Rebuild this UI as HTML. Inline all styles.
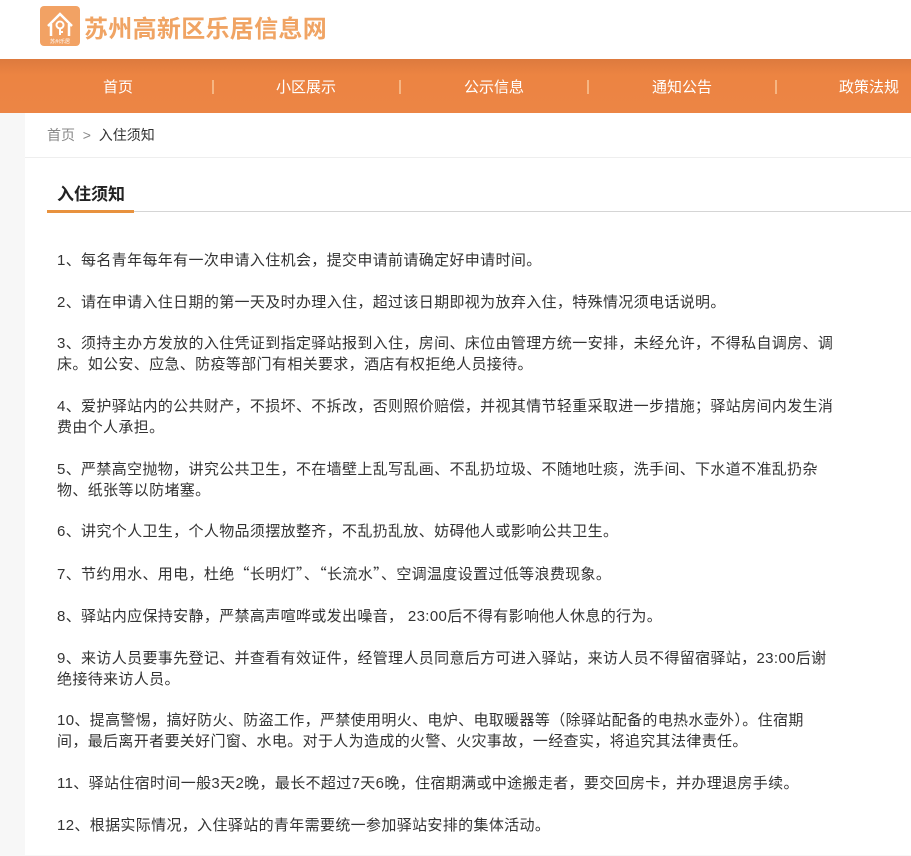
<!DOCTYPE html>
<html><head><meta charset="utf-8"><style>
*{margin:0;padding:0;box-sizing:border-box}
body{width:911px;height:855px;overflow:hidden;background:#f7f7f7;font-family:"Liberation Sans","Noto Sans CJK SC",sans-serif;color:#333;position:relative}
.top{position:absolute;left:0;top:0;width:911px;height:59px;background:#fff}
.logo{position:absolute;left:40px;top:6px;width:40px;height:40px;border-radius:4px;background:#f2a264}
.brand{position:absolute;left:84px;top:9px;font-size:24px;font-weight:bold;color:#f0a464;letter-spacing:0.3px;white-space:nowrap}
.nav{position:absolute;left:0;top:59px;width:911px;height:54px;background:linear-gradient(#dd7a3e,#ec8442 30%,#ec8545)}
.nav span{position:absolute;top:17px;font-size:15px;color:#fff;white-space:nowrap;transform:translateX(-50%)}
.nav i{position:absolute;top:21px;width:2px;height:14px;background:#f6b582}
.main{position:absolute;left:25px;top:113px;width:886px;height:742px;background:#fff}
.bc{position:absolute;left:22px;top:12px;font-size:14px;color:#888;white-space:nowrap}
.bc b{font-weight:normal;color:#333}
.l1{position:absolute;left:0;top:44px;width:886px;height:1px;background:#eee}
.tt{position:absolute;left:32px;top:67px;font-size:17px;font-weight:bold;color:#222}
.l2{position:absolute;left:22px;top:98px;width:864px;height:1px;background:#d5d5d5}
.l3{position:absolute;left:22px;top:97px;width:87px;height:3px;background:#e8923e}
.txt{position:absolute;left:32px;top:137px;font-size:15px;line-height:21px;white-space:nowrap;letter-spacing:0.35px}
.txt p{margin-bottom:20.7px}
.q{font-family:"Noto Sans CJK SC",sans-serif}
</style></head><body>
<div class="top">
<div class="logo"><svg width="40" height="40" viewBox="0 0 40 40"><path d="M8 20 L20 8 L32 20 M11 18 V30 M29 18 V30" stroke="#fff" stroke-width="2.5" fill="none"/><circle cx="20" cy="19" r="3.5" stroke="#fff" stroke-width="2" fill="none"/><path d="M20 22 V29 M20 26 H23" stroke="#fff" stroke-width="2"/><text x="20" y="37" font-size="5" fill="#fff" text-anchor="middle" font-family="Noto Sans CJK SC">苏州乐居</text></svg></div>
<div class="brand">苏州高新区乐居信息网</div>
</div>
<div class="nav">
<span style="left:118px">首页</span><i style="left:212px"></i>
<span style="left:306px">小区展示</span><i style="left:399px"></i>
<span style="left:494px">公示信息</span><i style="left:587px"></i>
<span style="left:682px">通知公告</span><i style="left:775px"></i>
<span style="left:869px">政策法规</span>
</div>
<div class="main">
<div class="bc">首页 &nbsp;&gt;&nbsp; <b>入住须知</b></div>
<div class="l1"></div>
<div class="tt">入住须知</div>
<div class="l2"></div><div class="l3"></div>
<div class="txt">
<p>1、每名青年每年有一次申请入住机会，提交申请前请确定好申请时间。</p>
<p>2、请在申请入住日期的第一天及时办理入住，超过该日期即视为放弃入住，特殊情况须电话说明。</p>
<p>3、须持主办方发放的入住凭证到指定驿站报到入住，房间、床位由管理方统一安排，未经允许，不得私自调房、调<br>床。如公安、应急、防疫等部门有相关要求，酒店有权拒绝人员接待。</p>
<p>4、爱护驿站内的公共财产，不损坏、不拆改，否则照价赔偿，并视其情节轻重采取进一步措施；驿站房间内发生消<br>费由个人承担。</p>
<p>5、严禁高空抛物，讲究公共卫生，不在墙壁上乱写乱画、不乱扔垃圾、不随地吐痰，洗手间、下水道不准乱扔杂<br>物、纸张等以防堵塞。</p>
<p>6、讲究个人卫生，个人物品须摆放整齐，不乱扔乱放、妨碍他人或影响公共卫生。</p>
<p>7、节约用水、用电，杜绝<span class="q">“</span>长明灯<span class="q">”</span>、<span class="q">“</span>长流水<span class="q">”</span>、空调温度设置过低等浪费现象。</p>
<p>8、驿站内应保持安静，严禁高声喧哗或发出噪音， 23:00后不得有影响他人休息的行为。</p>
<p>9、来访人员要事先登记、并查看有效证件，经管理人员同意后方可进入驿站，来访人员不得留宿驿站，23:00后谢<br>绝接待来访人员。</p>
<p>10、提高警惕，搞好防火、防盗工作，严禁使用明火、电炉、电取暖器等（除驿站配备的电热水壶外）。住宿期<br>间，最后离开者要关好门窗、水电。对于人为造成的火警、火灾事故，一经查实，将追究其法律责任。</p>
<p>11、驿站住宿时间一般3天2晚，最长不超过7天6晚，住宿期满或中途搬走者，要交回房卡，并办理退房手续。</p>
<p>12、根据实际情况，入住驿站的青年需要统一参加驿站安排的集体活动。</p>
</div>
</div>
</body></html>
